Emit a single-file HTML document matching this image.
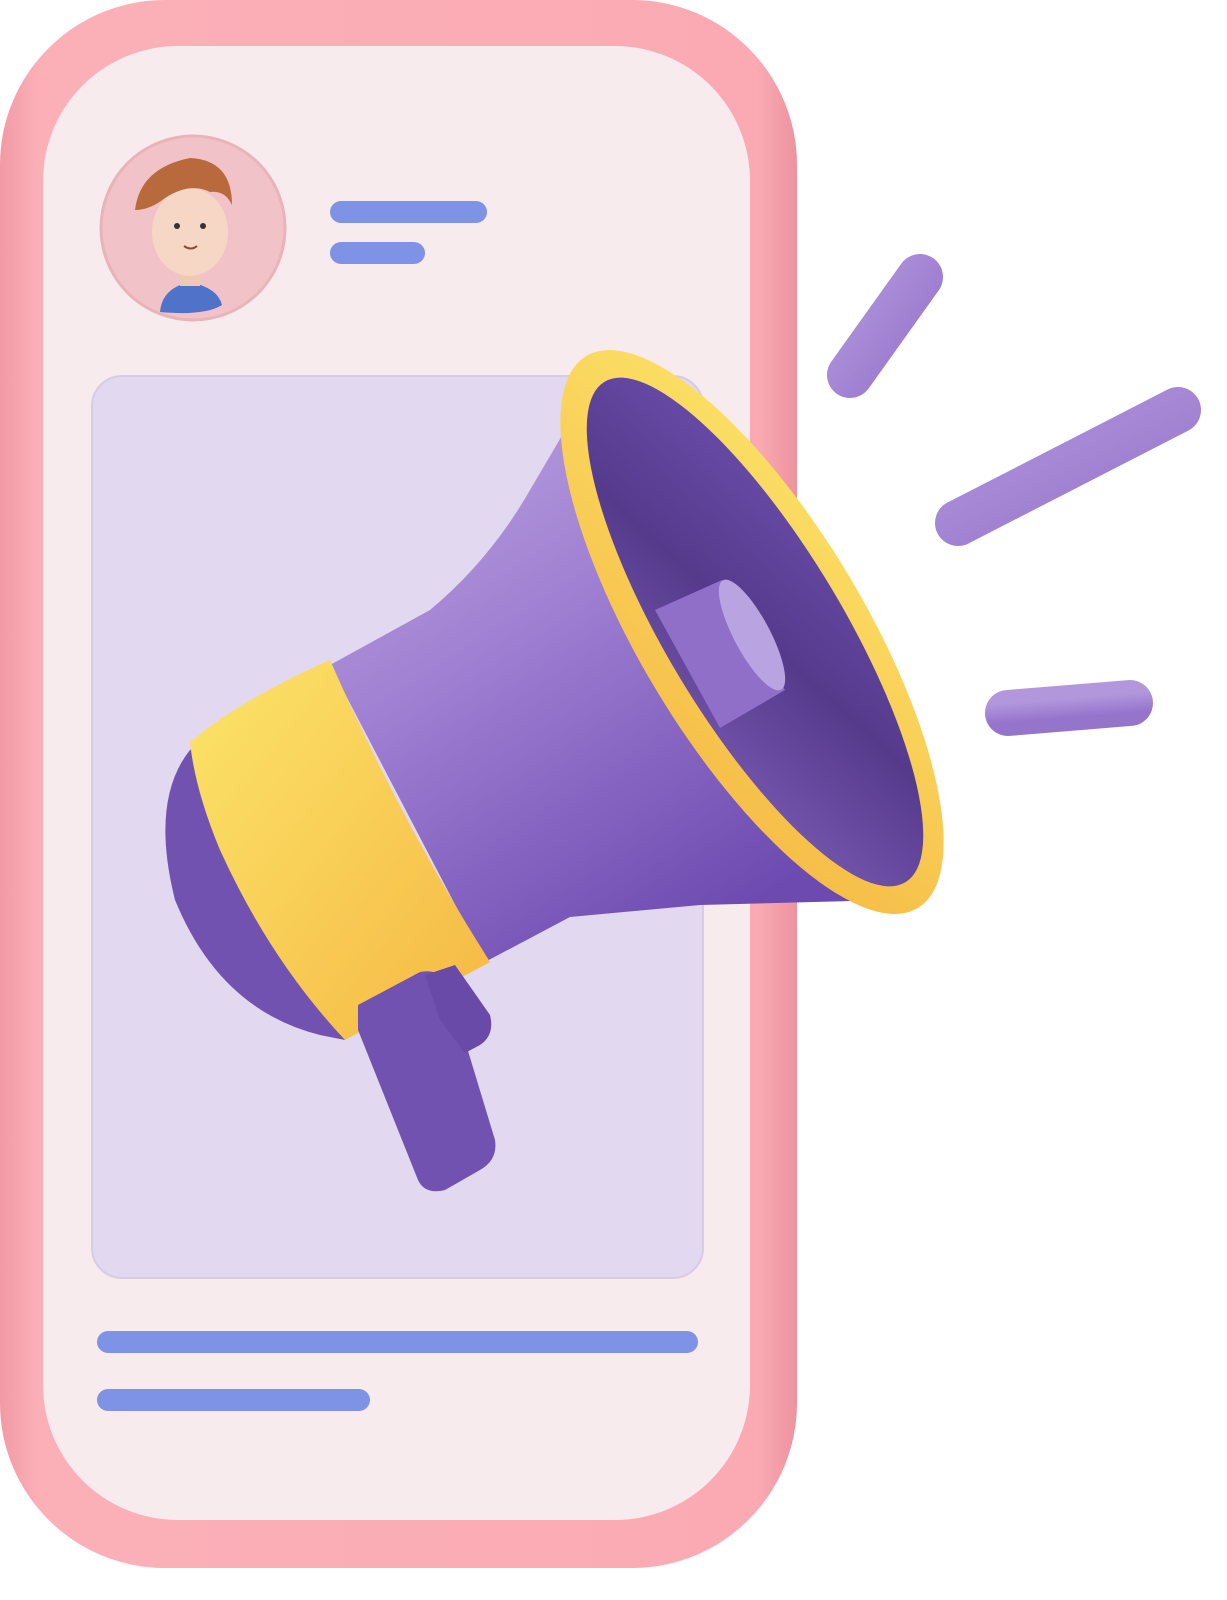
<!DOCTYPE html>
<html><head><meta charset="utf-8"><style>
html,body{margin:0;padding:0;background:#fff;width:1227px;height:1600px;overflow:hidden}
svg{display:block}
</style></head><body>
<svg width="1227" height="1600" viewBox="0 0 1227 1600" xmlns="http://www.w3.org/2000/svg">
<defs>
<linearGradient id="ph" x1="0" x2="1" y1="0" y2="0">
<stop offset="0" stop-color="#f29aa5"/><stop offset="0.05" stop-color="#fbb0b8"/><stop offset="0.95" stop-color="#fbaab3"/><stop offset="1" stop-color="#ec939f"/></linearGradient>
<linearGradient id="cone" x1="0" y1="0" x2="0.6" y2="1">
<stop offset="0" stop-color="#c4aee3"/><stop offset="0.5" stop-color="#9d7dd1"/><stop offset="1" stop-color="#6c4ab0"/></linearGradient>
<linearGradient id="yel" x1="0" y1="0" x2="1" y2="1">
<stop offset="0" stop-color="#fce46a"/><stop offset="1" stop-color="#f5b843"/></linearGradient>
<linearGradient id="mouth" x1="0" y1="0" x2="1" y2="1">
<stop offset="0" stop-color="#6d4fae"/><stop offset="0.5" stop-color="#553a8c"/><stop offset="1" stop-color="#7c5cb4"/></linearGradient>
<linearGradient id="ray" x1="0" y1="0" x2="1" y2="1">
<stop offset="0" stop-color="#b297dc"/><stop offset="1" stop-color="#9574cc"/></linearGradient>
</defs>
<rect x="0" y="0" width="797" height="1568" rx="165" fill="url(#ph)"/>
<rect x="43" y="46" width="707" height="1474" rx="135" fill="#f8ebee"/>
<circle cx="193" cy="228" r="92" fill="#f1c3c9" stroke="#eab3ba" stroke-width="3"/>
<path d="M160 312 Q162 288 190 282 Q218 288 222 305 Q205 316 160 312Z" fill="#4e73c8"/>
<rect x="180" y="262" width="20" height="24" fill="#f0c9b3"/>
<ellipse cx="190" cy="232" rx="38" ry="44" fill="#f6d6c4"/>
<path d="M135 210 Q140 168 190 158 Q232 160 232 205 Q225 190 210 192 Q190 182 165 198 Q150 210 135 210Z" fill="#b86a3c"/>
<circle cx="177" cy="226" r="3" fill="#333"/><circle cx="203" cy="226" r="3" fill="#333"/>
<path d="M184 246 Q191 251 197 246" stroke="#8a4a3a" stroke-width="2" fill="none"/>
<rect x="330" y="201" width="157" height="22" rx="11" fill="#7f93e6"/>
<rect x="330" y="242" width="95" height="22" rx="11" fill="#7f93e6"/>
<rect x="92" y="376" width="611" height="902" rx="30" fill="#e2d8f0" stroke="#d8cbe6" stroke-width="2"/>
<rect x="97" y="1331" width="601" height="22" rx="11" fill="#7f93e6"/>
<rect x="97" y="1389" width="273" height="22" rx="11" fill="#7f93e6"/>
<g stroke="url(#ray)" stroke-width="46" stroke-linecap="round">
<line x1="850" y1="375" x2="920" y2="277"/>
<line x1="958" y1="523" x2="1178" y2="410"/>
<line x1="1008" y1="713" x2="1130" y2="703"/>
</g>
<path d="M190 750 Q150 800 175 900 Q220 1010 320 1035 L345 1040 L200 745Z" fill="#7252b0"/>
<path d="M330 665 L430 610 Q490 560 530 490 L580 405 L620 360 L890 900 L700 905 L570 917 L485 962Z" fill="url(#cone)"/>
<path d="M190 742 Q240 700 330 660 Q400 820 490 962 Q420 1000 345 1040 Q270 960 220 850 Q195 790 190 742Z" fill="url(#yel)"/>
<path d="M358 1005 L420 972 Q440 968 448 985 L495 1140 Q498 1160 480 1170 L445 1190 Q425 1195 418 1180 L358 1030Z" fill="#7252b0"/>
<path d="M425 975 L455 965 L490 1015 Q495 1035 480 1045 L465 1053 L440 1020Z" fill="#6a4aa8"/>
<ellipse cx="752" cy="632" rx="322" ry="112" transform="rotate(59 752 632)" fill="url(#yel)"/>
<ellipse cx="755" cy="632" rx="292" ry="88" transform="rotate(59 755 632)" fill="url(#mouth)"/>
<path d="M655 610 L722 580 L785 690 L720 728Z" fill="#8f6fc8"/>
<ellipse cx="752" cy="635" rx="62" ry="18" transform="rotate(62 752 635)" fill="#b9a3e0"/>
</svg>
</body></html>
